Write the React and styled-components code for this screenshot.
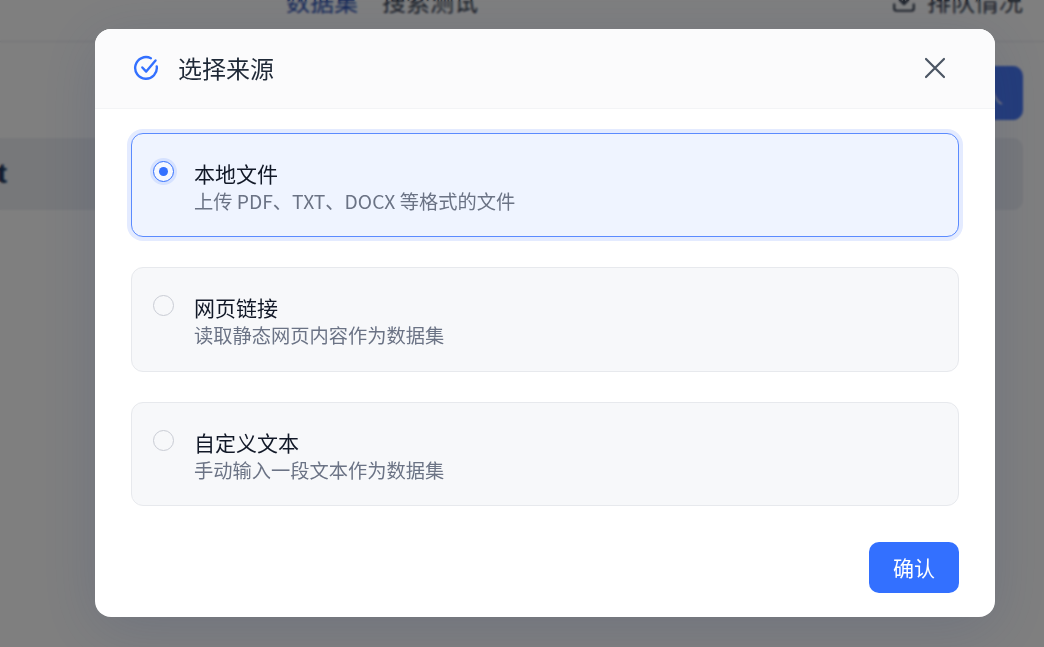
import React from "react";
import styled, { createGlobalStyle } from "styled-components";

const Global = createGlobalStyle`
  html, body { margin: 0; height: 100%; overflow: hidden; background: #fff; }
  body { font-family: "Noto Sans CJK SC", "Liberation Sans", sans-serif; }
  * { box-sizing: border-box; }
`;

const Page = styled.div`
  height: 647px;
  overflow: hidden;
  background: #fff;
`;
const TopBar = styled.header`
  height: 42px;
  border-bottom: 1px solid #e5e7eb;
  display: flex;
  align-items: flex-end;
  padding: 0 21px 23px 286px;
  overflow: hidden;
  font-size: 24px;
  line-height: 34px;
  color: #374151;
`;
const Tab = styled.span`
  margin-right: 24px;
  color: ${(p) => (p.$active ? "#2a4fb0" : "#374151")};
`;
const Queue = styled.span`
  margin-left: auto;
  display: flex;
  align-items: center;
  gap: 10px;
`;
const Toolbar = styled.div`
  display: flex;
  justify-content: flex-end;
  padding: 24px 21px 18px 0;
`;
const AddButton = styled.div`
  width: 200px;
  height: 54px;
  border-radius: 10px;
  background: #4878f5;
  color: #fff;
  font-size: 24px;
  font-weight: 300;
  line-height: 54px;
  text-align: right;
  padding-right: 20px;
`;
const Row = styled.div`
  margin-right: 21px;
  height: 72px;
  border-radius: 0 10px 10px 0;
  background: #eef0f4;
  display: flex;
  align-items: center;
  overflow: hidden;
`;
const RowTitle = styled.span`
  margin-left: -94px;
  font-size: 28px;
  font-weight: 700;
  color: #1f3a5f;
  font-family: "Liberation Sans", sans-serif;
`;

const Overlay = styled.div`
  position: fixed;
  inset: 0;
  padding: 0 0 2px 46px;
  background: rgba(0, 0, 0, 0.5);
  backdrop-filter: blur(1px);
  display: flex;
  align-items: center;
  justify-content: center;
`;
const Modal = styled.div`
  width: 900px;
  height: 588px;
  border-radius: 16px;
  background: #fff;
  overflow: hidden;
  display: flex;
  flex-direction: column;
  box-shadow: 0 12px 60px rgba(40, 60, 120, 0.18);
`;
const ModalHeader = styled.div`
  height: 80px;
  flex: none;
  background: #fbfbfc;
  border-bottom: 1px solid #f3f4f6;
  display: flex;
  align-items: center;
  padding: 0 48px 0 38px;
  gap: 19px;
`;
const ModalTitle = styled.h2`
  margin: 0;
  font-size: 24px;
  font-weight: 400;
  color: #1f2937;
  line-height: 34px;
`;
const CloseButton = styled.button`
  margin-left: auto;
  padding: 0;
  border: 0;
  background: none;
  display: flex;
  color: #4b5563;
`;
const ModalBody = styled.div`
  flex: 1;
  padding: 24px 36px 24px;
  display: flex;
  flex-direction: column;
  gap: 30px;
`;
const Option = styled.label`
  display: flex;
  height: ${(p) => p.$h}px;
  flex: none;
  align-items: flex-start;
  gap: 20px;
  padding: 24px 21px;
  border-radius: 12px;
  border: 1px solid ${(p) => (p.$selected ? "#5b8bff" : "#e7e9ed")};
  background: ${(p) => (p.$selected ? "#eff4ff" : "#f7f8fa")};
  box-shadow: ${(p) => (p.$selected ? "0 0 0 4px #e4ebff" : "none")};
`;
const Radio = styled.span`
  flex: none;
  margin-top: 3px;
  width: 21px;
  height: 21px;
  border-radius: 50%;
  border: 1px solid ${(p) => (p.$selected ? "#3370ff" : "#c9ccd4")};
  background: ${(p) => (p.$selected ? "#f5f8ff" : "transparent")};
  box-shadow: ${(p) => (p.$selected ? "0 0 0 3px #d6e2ff" : "none")};
  display: flex;
  align-items: center;
  justify-content: center;
  &::after {
    content: "";
    display: ${(p) => (p.$selected ? "block" : "none")};
    width: 9px;
    height: 9px;
    border-radius: 50%;
    background: #3370ff;
  }
`;
const OptionText = styled.div`
  display: flex;
  flex-direction: column;
`;
const OptionTitle = styled.span`
  font-size: 21px;
  line-height: 30px;
  color: #111827;
`;
const OptionDesc = styled.span`
  font-size: 19.25px;
  line-height: 26px;
  color: #6b7385;
`;
const Footer = styled.div`
  margin-top: 6px;
  display: flex;
  justify-content: flex-end;
`;
const Confirm = styled.button`
  width: 90px;
  height: 51px;
  border: 0;
  border-radius: 10px;
  background: #3370ff;
  color: #fff;
  font-family: inherit;
  font-size: 21px;
  padding: 0;
`;

const options = [
  { title: "本地文件", desc: "上传 PDF、TXT、DOCX 等格式的文件", h: 104, selected: true },
  { title: "网页链接", desc: "读取静态网页内容作为数据集", h: 105 },
  { title: "自定义文本", desc: "手动输入一段文本作为数据集", h: 104 },
];

export default function App() {
  return (
    <>
      <Global />
      <Page>
        <TopBar>
          <Tab $active>数据集</Tab>
          <Tab>搜索测试</Tab>
          <Queue>
            <svg width="26" height="26" viewBox="0 0 24 24" fill="none" stroke="currentColor" strokeWidth="2" strokeLinecap="round" strokeLinejoin="round">
              <path d="M21 15v4a2 2 0 0 1-2 2H5a2 2 0 0 1-2-2v-4" />
              <path d="M12 3v12M7 10l5 5 5-5" />
            </svg>
            排队情况
          </Queue>
        </TopBar>
        <Toolbar>
          <AddButton>导入</AddButton>
        </Toolbar>
        <Row>
          <RowTitle>Dataset</RowTitle>
        </Row>
      </Page>
      <Overlay>
        <Modal>
          <ModalHeader>
            <svg width="26" height="26" viewBox="0 0 24 24" fill="none" stroke="#3370ff" strokeWidth="2.2" strokeLinecap="round" strokeLinejoin="round">
              <path d="M21.9 10.5A10 10 0 1 1 16.5 3" />
              <path d="M8.6 11.5l3.6 3.8L20.8 5" />
            </svg>
            <ModalTitle>选择来源</ModalTitle>
            <CloseButton aria-label="关闭">
              <svg width="24" height="24" viewBox="0 0 24 24" fill="none" stroke="currentColor" strokeWidth="2.2" strokeLinecap="round">
                <path d="M3 3l18 18M21 3L3 21" />
              </svg>
            </CloseButton>
          </ModalHeader>
          <ModalBody>
            {options.map((o) => (
              <Option key={o.title} $selected={o.selected} $h={o.h}>
                <Radio $selected={o.selected} />
                <OptionText>
                  <OptionTitle>{o.title}</OptionTitle>
                  <OptionDesc>{o.desc}</OptionDesc>
                </OptionText>
              </Option>
            ))}
            <Footer>
              <Confirm>确认</Confirm>
            </Footer>
          </ModalBody>
        </Modal>
      </Overlay>
    </>
  );
}
